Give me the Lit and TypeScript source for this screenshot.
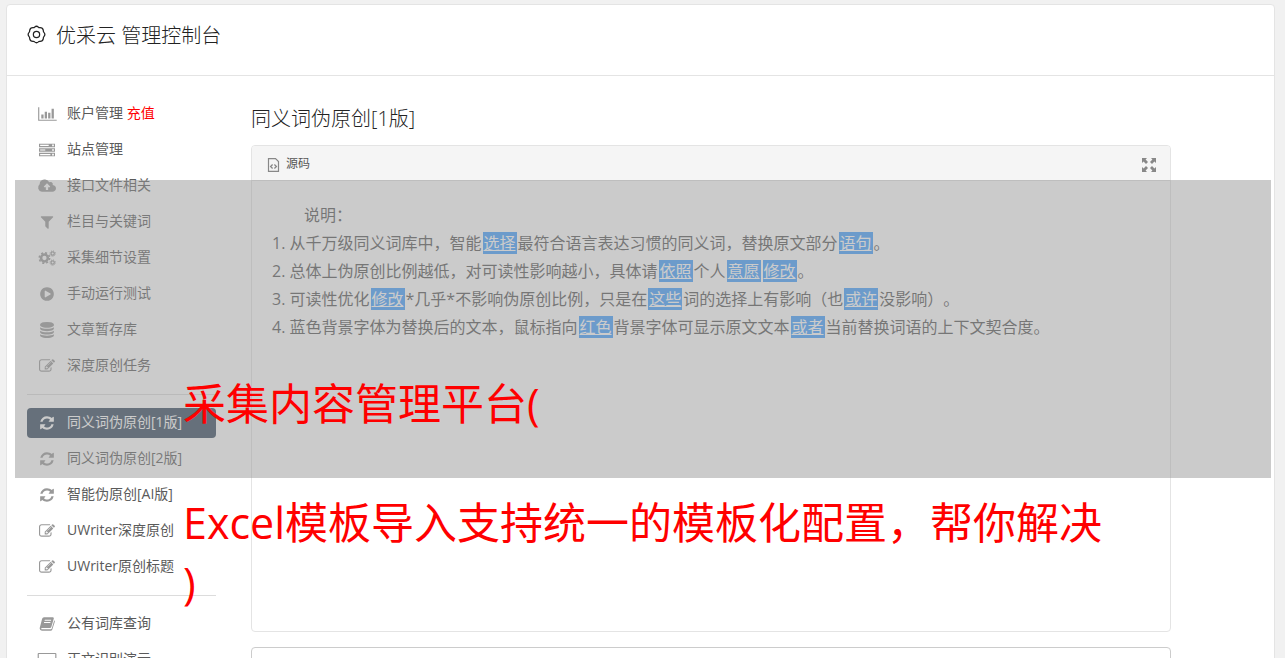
import { LitElement, html, css, svg } from "lit";
import { customElement } from "lit/decorators.js";

const glyphs: Record<string, unknown> = {
  refresh: svg`<path d="M1639 1056q0 5-1 7-64 268-268 434.5t-478 166.5q-146 0-282.5-55t-243.5-157l-129 129q-19 19-45 19t-45-19-19-45v-448q0-26 19-45t45-19h448q26 0 45 19t19 45-19 45l-137 137q71 66 161 102t187 36q134 0 250-65t186-179q11-17 53-117 8-23 30-23h192q13 0 22.5 9.5t9.5 22.5zm25-800v448q0 26-19 45t-45 19h-448q-26 0-45-19t-19-45 19-45l138-138q-148-137-349-137-134 0-250 65t-186 179q-11 17-53 117-8 23-30 23h-199q-13 0-22.5-9.5t-9.5-22.5v-7q65-268 270-434.5t480-166.5q146 0 284 55.5t245 156.5l130-129q19-19 45-19t45 19 19 45z"/>`,
  edit: svg`<path d="M888 1184l116-116-152-152-116 116v56h96v96h56zm440-720q-16-16-33 1l-350 350q-17 17-1 33t33-1l350-350q17-17 1-33zm80 594v190q0 119-84.5 203.5t-203.5 84.5h-832q-119 0-203.5-84.5t-84.5-203.5v-832q0-119 84.5-203.5t203.5-84.5h832q63 0 117 25 15 7 18 23 3 17-9 29l-49 49q-14 14-32 8-23-6-45-6h-832q-66 0-113 47t-47 113v832q0 66 47 113t113 47h832q66 0 113-47t47-113v-126q0-13 9-22l64-64q15-15 35-7t20 29zm-96-738l288 288-672 672h-288v-288zm444 132l-92 92-288-288 92-92q28-28 68-28t68 28l152 152q28 28 28 68t-28 68z"/>`,
  filter: svg`<path d="M1595 295q17 41-14 70l-493 493v742q0 42-39 59-13 5-25 5-27 0-45-19l-256-256q-19-19-19-45v-486l-493-493q-31-29-14-70 17-39 59-39h1280q42 0 59 39z"/>`,
  play: svg`<path d="M896 128q209 0 385.5 103t279.5 279.5 103 385.5-103 385.5-279.5 279.5-385.5 103-385.5-103-279.5-279.5-103-385.5 103-385.5 279.5-279.5 385.5-103zm384 823q32-18 32-55t-32-55l-544-320q-31-19-64-1-32 19-32 56v640q0 37 32 56 16 8 32 8 17 0 32-9z"/>`,
  database: svg`<path d="M896 768q237 0 443-43t325-127v170q0 69-103 128t-280 93.5-385 34.5-385-34.5-280-93.5-103-128v-170q119 84 325 127t443 43zm0 768q237 0 443-43t325-127v170q0 69-103 128t-280 93.5-385 34.5-385-34.5-280-93.5-103-128v-170q119 84 325 127t443 43zm0-384q237 0 443-43t325-127v170q0 69-103 128t-280 93.5-385 34.5-385-34.5-280-93.5-103-128v-170q119 84 325 127t443 43zm0-1152q208 0 385 34.5t280 93.5 103 128v128q0 69-103 128t-280 93.5-385 34.5-385-34.5-280-93.5-103-128v-128q0-69 103-128t280-93.5 385-34.5z"/>`,
  chart: svg`<path d="M-96 128H32V1536H1984V1664H-96zM256 960H512V1408H256zM640 640H896V1408H640zM1024 768H1280V1408H1024zM1408 320H1664V1408H1408z"/>`,
  server: svg`<path fill-rule="evenodd" d="M0 192H1792V576H0zM128 320V448H1088V320zM1472 288V480H1664V288zM0 704H1792V1088H0zM128 832V960H704V832zM1472 800V992H1664V800zM0 1216H1792V1600H0zM128 1344V1472H1280V1344zM1472 1312V1504H1664V1312z"/>`,
  cloud: svg`<path fill-rule="evenodd" d="M320 1536A480 480 0 0 1 70 690Q90 256 576 180Q960 120 1150 480Q1400 380 1530 600Q1560 680 1530 770Q1930 860 1900 1200Q1850 1500 1500 1536zM896 600L544 960Q530 1010 580 1024H768V1344H1024V1024H1216Q1260 1010 1248 960z"/>`,
  cogs: svg`<g fill="none" stroke="currentColor"><circle cx="610" cy="896" r="380" stroke-width="280"/><circle cx="610" cy="896" r="580" stroke-width="180" stroke-dasharray="228 228"/><circle cx="1530" cy="400" r="185" stroke-width="140"/><circle cx="1530" cy="400" r="300" stroke-width="110" stroke-dasharray="118 118"/><circle cx="1530" cy="1410" r="185" stroke-width="140"/><circle cx="1530" cy="1410" r="300" stroke-width="110" stroke-dasharray="118 118"/></g>`,
  book: svg`<path fill-rule="evenodd" d="M560 128H1560Q1690 150 1660 290L1370 1250Q1330 1340 1240 1340H330Q240 1350 245 1420Q260 1480 350 1480H1320Q1400 1470 1430 1390L1710 480Q1810 540 1770 650L1480 1540Q1430 1660 1310 1664H330Q80 1650 70 1380L350 300Q400 150 560 128zM650 420L620 520H1340L1370 420zM580 670L550 770H1260L1290 670z"/>`,
  screen: svg`<path fill-rule="evenodd" d="M-32 100H1824Q1950 110 1950 230V1300Q1940 1410 1824 1420H1150V1560H1350V1664H450V1560H650V1420H-32Q-150 1410-150 1300V230Q-150 110-32 100zM-20 230V1290H1820V230z"/>`,
};

const icon = (name: string) =>
  html`<svg class="glyph" viewBox="0 0 1792 1792" aria-hidden="true">${glyphs[name]}</svg>`;

interface Item {
  icon: string;
  label: string;
  badge?: string;
  active?: boolean;
}

const groups: Item[][] = [
  [
    { icon: "chart", label: "账户管理", badge: "充值" },
    { icon: "server", label: "站点管理" },
    { icon: "cloud", label: "接口文件相关" },
    { icon: "filter", label: "栏目与关键词" },
    { icon: "cogs", label: "采集细节设置" },
    { icon: "play", label: "手动运行测试" },
    { icon: "database", label: "文章暂存库" },
    { icon: "edit", label: "深度原创任务" },
  ],
  [
    { icon: "refresh", label: "同义词伪原创[1版]", active: true },
    { icon: "refresh", label: "同义词伪原创[2版]" },
    { icon: "refresh", label: "智能伪原创[AI版]" },
    { icon: "edit", label: "UWriter深度原创" },
    { icon: "edit", label: "UWriter原创标题" },
  ],
  [
    { icon: "book", label: "公有词库查询" },
    { icon: "screen", label: "正文识别演示" },
  ],
];

@customElement("side-menu")
export class SideMenu extends LitElement {
  static styles = css`
    :host {
      display: block;
    }
    .group {
      display: flex;
      flex-direction: column;
      gap: 6px;
      list-style: none;
      margin: 0;
      padding: 0;
    }
    .group + .group {
      border-top: 1px solid #dcdcdc;
      margin-top: 13px;
      padding-top: 13px;
    }
    .link {
      display: grid;
      grid-template-columns: 40px 1fr;
      align-items: center;
      height: 30px;
      border-radius: 4px;
      color: #5a5a5a;
      font-size: 14px;
      line-height: 28px;
      text-decoration: none;
      white-space: nowrap;
    }
    .label {
      padding-bottom: 2px;
    }
    .active {
      background: #34495e;
      color: #fff;
    }
    .glyph {
      width: 16px;
      height: 16px;
      justify-self: center;
      overflow: visible;
      fill: currentColor;
      color: #999;
    }
    .active .glyph {
      color: #fff;
    }
    .badge {
      color: #f00;
    }
  `;

  render() {
    return html`<nav aria-label="菜单">
      ${groups.map(
        (group) => html`<ul class="group">
          ${group.map(
            (item) => html`<li>
              <a class="link ${item.active ? "active" : ""}" href="#">
                ${icon(item.icon)}
                <span class="label">${item.label}${item.badge ? html` <span class="badge">${item.badge}</span>` : ""}</span>
              </a>
            </li>`
          )}
        </ul>`
      )}
    </nav>`;
  }
}

const word = (text: string) => html`<a class="word" href="#">${text}</a>`;

@customElement("text-editor")
export class TextEditor extends LitElement {
  static styles = css`
    :host {
      display: block;
      border: 1px solid #e4e4e4;
      border-radius: 4px;
      overflow: hidden;
    }
    .toolbar {
      display: flex;
      align-items: center;
      justify-content: space-between;
      height: 34px;
      padding: 0 13px 0 15px;
      background: #f5f5f5;
      border-bottom: 1px solid #e4e4e4;
    }
    .tool {
      display: flex;
      align-items: center;
      gap: 5px;
      padding: 0;
      border: 0;
      background: none;
      color: #555;
      font: inherit;
      font-size: 12px;
    }
    .icon {
      width: 14px;
      height: 14px;
      margin-top: 4px;
      color: #888;
    }
    .wide {
      width: 16px;
      height: 16px;
    }
    .body {
      box-sizing: border-box;
      min-height: 450px;
      padding: 20px;
      color: #555;
      font-size: 16px;
      line-height: 28px;
    }
    .lead {
      margin: 0;
      text-indent: 2em;
    }
    .notes {
      margin: 0;
      padding: 0;
      list-style-position: inside;
    }
    .word {
      margin: 0 1px;
      padding: 0 1px;
      background: #409eff;
      color: #fff;
    }
  `;

  render() {
    return html`
      <div class="toolbar">
        <button class="tool">
          <svg class="icon" viewBox="0 0 14 14" fill="none" stroke="currentColor" aria-hidden="true">
            <path d="M1.5 .6H8.5L11.5 3.6V13.4H1.5z" stroke-width="1.2" />
            <path d="M5.6 6.5L3.6 8.5L5.6 10.5M7.4 6.5L9.4 8.5L7.4 10.5" stroke-width="1.3" />
          </svg>
          源码
        </button>
        <button class="tool" aria-label="全屏">
          <svg class="icon wide" viewBox="0 0 16 16" fill="currentColor" aria-hidden="true">
            <path d="M1 1H6L4.6 2.6L7 5L5 7L2.6 4.6L1 6zM15 1V6L13.4 4.6L11 7L9 5L11.4 2.6L10 1zM1 15V10L2.6 11.4L5 9L7 11L4.6 13.4L6 15zM15 15H10L11.4 13.4L9 11L11 9L13.4 11.4L15 10z" />
          </svg>
        </button>
      </div>
      <div class="body">
        <p class="lead">说明：</p>
        <ol class="notes">
          <li>从千万级同义词库中，智能${word("选择")}最符合语言表达习惯的同义词，替换原文部分${word("语句")}。</li>
          <li>总体上伪原创比例越低，对可读性影响越小，具体请${word("依照")}个人${word("意愿")}${word("修改")}。</li>
          <li>可读性优化${word("修改")}*几乎*不影响伪原创比例，只是在${word("这些")}词的选择上有影响（也${word("或许")}没影响）。</li>
          <li>蓝色背景字体为替换后的文本，鼠标指向${word("红色")}背景字体可显示原文文本${word("或者")}当前替换词语的上下文契合度。</li>
        </ol>
      </div>
    `;
  }
}

@customElement("app-root")
export class AppRoot extends LitElement {
  static styles = css`
    :host {
      display: block;
      position: relative;
      box-sizing: border-box;
      height: 100vh;
      overflow: hidden;
      padding: 4px 10px 0 6px;
      background: #f1f1f1;
      color: #222;
      font-family: "Open Sans", "Noto Sans CJK SC", sans-serif;
      font-size: 14px;
      text-spacing-trim: space-all;
    }
    .panel {
      border: 1px solid #e4e4e4;
      border-radius: 4px;
      background: #fff;
    }
    .header {
      display: flex;
      align-items: center;
      gap: 10px;
      box-sizing: border-box;
      height: 71px;
      padding: 0 20px 8px;
      border-bottom: 1px solid #e4e4e4;
    }
    .gear {
      width: 19px;
      height: 19px;
      margin-bottom: 3px;
    }
    .title,
    .heading {
      margin: 0;
      font-size: 20px;
      font-weight: 300;
      line-height: 30px;
    }
    .columns {
      display: flex;
      gap: 35px;
      padding: 23px 20px;
    }
    .menu {
      flex: 0 0 189px;
    }
    .content {
      flex: 1;
      min-width: 0;
      max-width: 920px;
      display: flex;
      flex-direction: column;
      padding-top: 5px;
    }
    .editor {
      margin: 11px 0 15px;
    }
    .result {
      display: block;
      box-sizing: border-box;
      width: 100%;
      height: 200px;
      border: 1px solid #ccc;
      border-radius: 4px;
      resize: none;
    }
    .banner {
      position: absolute;
      top: 180px;
      left: 15px;
      right: 14px;
      height: 298px;
      background: rgba(151, 151, 151, 0.5);
    }
    .caption {
      position: absolute;
      top: 374px;
      left: 183px;
      right: 180px;
      margin: 0;
      color: #f00;
      font-size: 43px;
      line-height: 60px;
    }
    .second {
      display: block;
      margin-top: 59px;
    }
  `;

  render() {
    return html`
      <div class="panel">
        <header class="header">
          <svg class="gear" viewBox="0 0 20 20" fill="none" stroke="currentColor" stroke-width="1.3" aria-hidden="true">
            <path d="M8 2.2Q10 .4 12 2.2Q12.7 3.1 13.8 2.7Q16.6 2.7 17.2 5.6Q17 6.8 17.8 7.8Q19.8 10 17.8 12.2Q17 13.2 17.2 14.4Q16.6 17.3 13.8 17.3Q12.7 16.9 12 17.8Q10 19.6 8 17.8Q7.3 16.9 6.2 17.3Q3.4 17.3 2.8 14.4Q3 13.2 2.2 12.2Q.2 10 2.2 7.8Q3 6.8 2.8 5.6Q3.4 2.7 6.2 2.7Q7.3 3.1 8 2.2z" />
            <circle cx="10" cy="10" r="3.3" />
          </svg>
          <h1 class="title">优采云 管理控制台</h1>
        </header>
        <div class="columns">
          <side-menu class="menu"></side-menu>
          <main class="content">
            <h2 class="heading">同义词伪原创[1版]</h2>
            <text-editor class="editor"></text-editor>
            <textarea class="result" aria-label="结果"></textarea>
          </main>
        </div>
      </div>
      <div class="banner"></div>
      <p class="caption">
        采集内容管理平台(<span class="second">Excel模板导入支持统一的模板化配置，帮你解决<br />)</span>
      </p>
    `;
  }
}
